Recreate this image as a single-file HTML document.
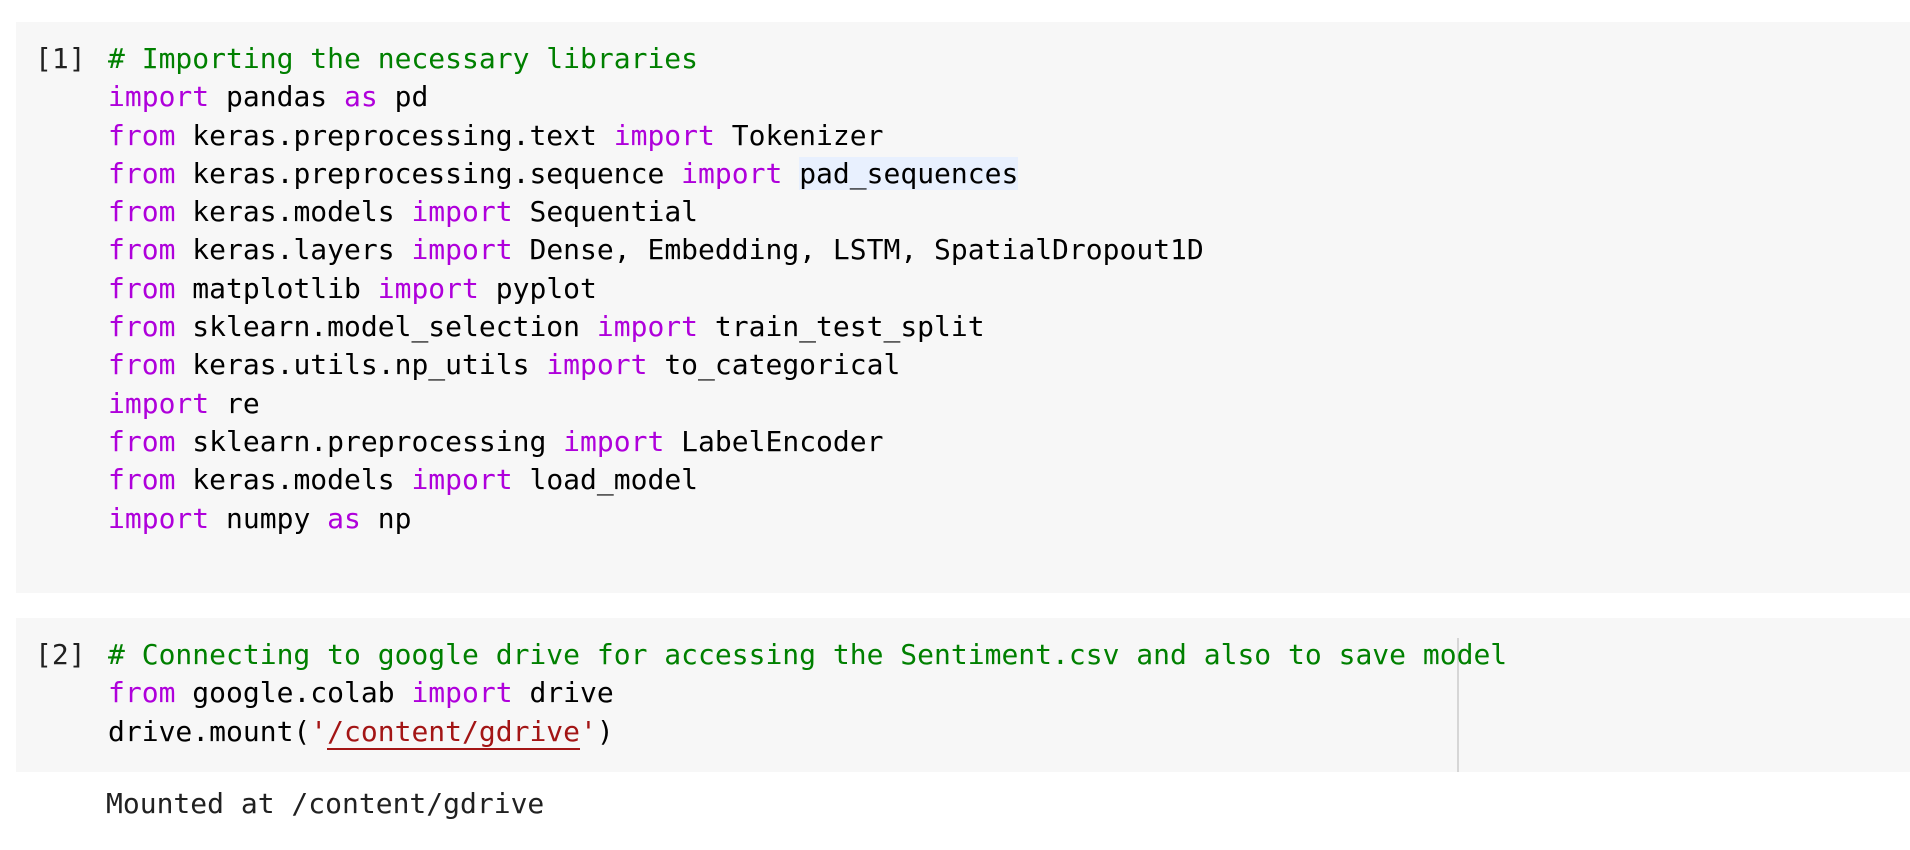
<!DOCTYPE html>
<html><head><style>
html,body{margin:0;padding:0;width:1910px;height:850px;background:#fff;overflow:hidden;position:relative}
.bg{position:absolute;left:16px;right:0;background:#f7f7f7}
pre{position:absolute;margin:0;font-family:"DejaVu Sans Mono","Liberation Mono",monospace;font-size:28px;line-height:38.3px;color:#000;white-space:pre}
.c{color:#008000}.k{color:#af00db}.s{color:#a31515}
.n{color:#212121}
.hl{background:#e8f0fe}
</style></head><body>
<div class="bg" style="top:22px;height:571px"></div>
<div class="bg" style="top:618px;height:154px"></div>
<div style="position:absolute;left:1457px;top:638px;width:2px;height:134px;background:#d6d6d6"></div>
<pre class="n" style="left:35px;top:40px">[1]</pre>
<pre style="left:108px;top:40px"><span class="c"># Importing the necessary libraries</span>
<span class="k">import</span> pandas <span class="k">as</span> pd
<span class="k">from</span> keras.preprocessing.text <span class="k">import</span> Tokenizer
<span class="k">from</span> keras.preprocessing.sequence <span class="k">import</span> <span class="hl">pad_sequences</span>
<span class="k">from</span> keras.models <span class="k">import</span> Sequential
<span class="k">from</span> keras.layers <span class="k">import</span> Dense, Embedding, LSTM, SpatialDropout1D
<span class="k">from</span> matplotlib <span class="k">import</span> pyplot
<span class="k">from</span> sklearn.model_selection <span class="k">import</span> train_test_split
<span class="k">from</span> keras.utils.np_utils <span class="k">import</span> to_categorical
<span class="k">import</span> re
<span class="k">from</span> sklearn.preprocessing <span class="k">import</span> LabelEncoder
<span class="k">from</span> keras.models <span class="k">import</span> load_model
<span class="k">import</span> numpy <span class="k">as</span> np</pre>
<pre class="n" style="left:35px;top:636px">[2]</pre>
<pre style="left:108px;top:636px"><span class="c"># Connecting to google drive for accessing the Sentiment.csv and also to save model</span>
<span class="k">from</span> google.colab <span class="k">import</span> drive
drive.mount(<span class="s">'<span style="border-bottom:2px solid #a31515">/content/gdrive</span>'</span>)</pre>
<pre class="n" style="left:106px;top:785px">Mounted at /content/gdrive</pre>
</body></html>
